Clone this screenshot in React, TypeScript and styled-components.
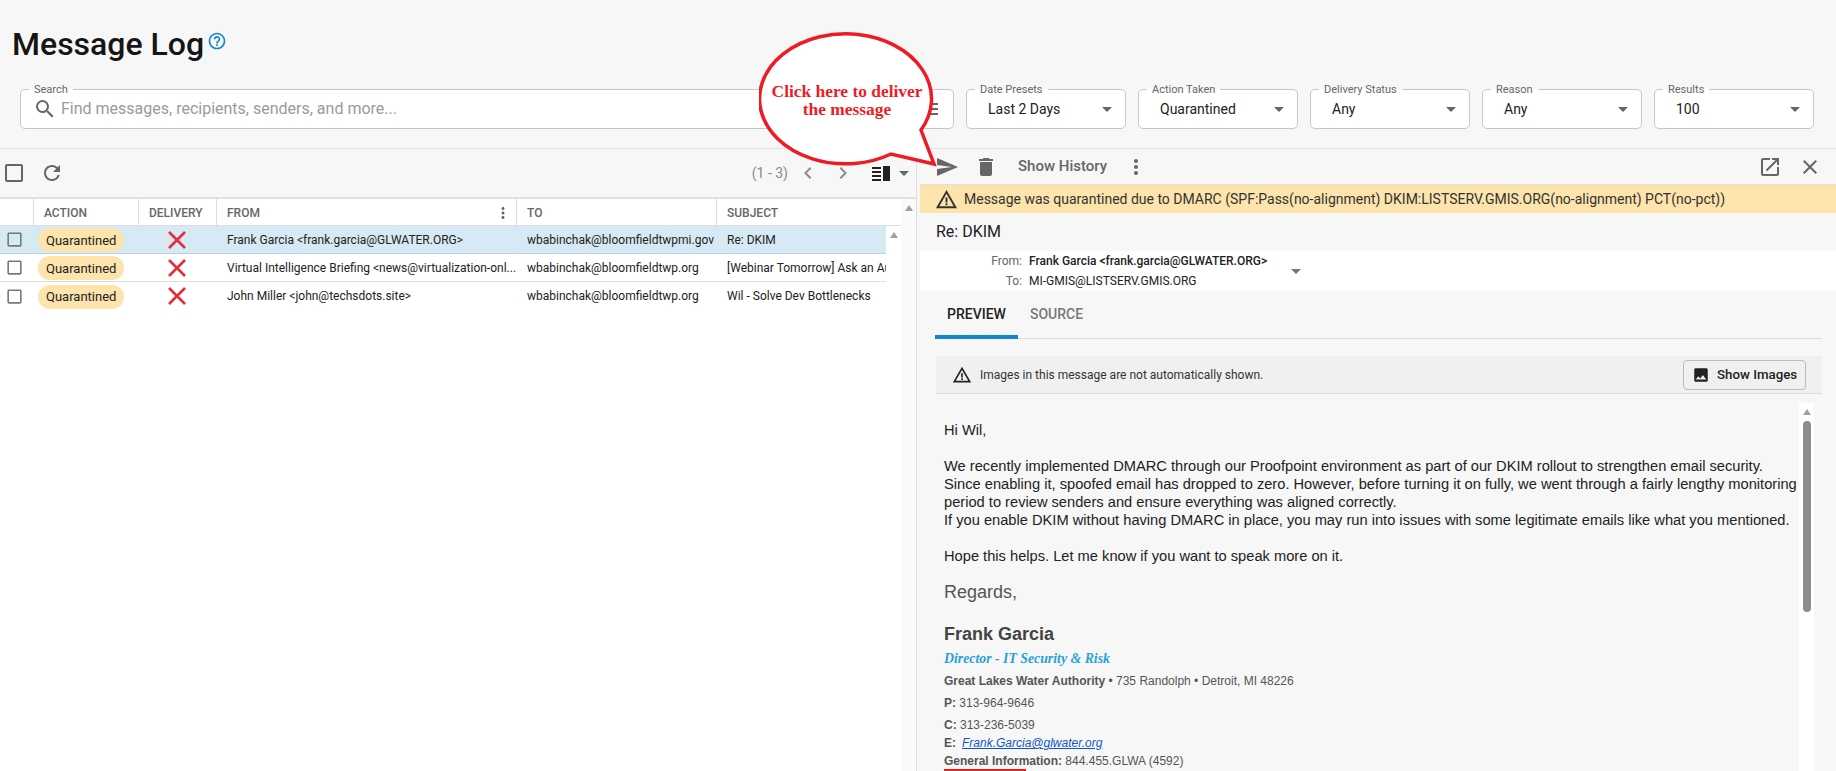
import React from "react";
import styled, { createGlobalStyle } from "styled-components";
import {
  MdArrowDropDown,
  MdCheckBoxOutlineBlank,
  MdChevronLeft,
  MdChevronRight,
  MdClose,
  MdDelete,
  MdHelpOutline,
  MdImage,
  MdMenu,
  MdMoreVert,
  MdOpenInNew,
  MdRefresh,
  MdSearch,
  MdSend,
  MdWarningAmber,
} from "react-icons/md";

const GlobalStyle = createGlobalStyle`
  html, body {
    margin: 0;
    padding: 0;
    height: 771px;
    overflow: hidden;
    background: #f7f7f7;
    font-family: Roboto, "Liberation Sans", sans-serif;
    color: #222;
  }
  * { box-sizing: border-box; }
`;

const Page = styled.div`
  position: relative;
  width: 1836px;
  height: 771px;
  display: flex;
  flex-direction: column;
  overflow: hidden;
`;

const Header = styled.header`
  height: 149px;
  flex: none;
  border-bottom: 1px solid #e0e0e0;
  padding: 24px 22px 0 12px;
`;

const TitleRow = styled.div`
  display: flex;
  align-items: flex-start;
  height: 65px;
`;

const Title = styled.h1`
  margin: 0;
  font-size: 32px;
  line-height: 40px;
  font-weight: 500;
  color: #151515;
`;

const HelpIcon = styled(MdHelpOutline)`
  font-size: 20px;
  color: #1487c9;
  margin: 7px 0 0 3px;
`;

const Filters = styled.div`
  display: flex;
  gap: 12px;
  margin-left: 8px;
`;

const Field = styled.div<{ $grow?: boolean }>`
  position: relative;
  flex: ${(p) => (p.$grow ? "1" : "none")};
  width: ${(p) => (p.$grow ? "auto" : "160px")};
  height: 40px;
  background: #fff;
  border: 1px solid #c6c6c6;
  border-radius: 5px;
  display: flex;
  align-items: center;
`;

const FieldLabel = styled.span`
  position: absolute;
  top: -7px;
  left: 8px;
  padding: 0 5px;
  font-size: 11px;
  line-height: 14px;
  color: #666;
  background: linear-gradient(#f7f7f7 0 6px, #fff 6px);
`;

const SelectValue = styled.span`
  margin-left: 21px;
  flex: 1;
  font-size: 14px;
  color: #222;
`;

const Caret = styled(MdArrowDropDown)`
  font-size: 24px;
  color: #666;
  margin-right: 6px;
`;

const SearchIcon = styled(MdSearch)`
  font-size: 24px;
  color: #666;
  margin-left: 12px;
`;

const Placeholder = styled.span`
  flex: 1;
  margin: 0 0 2px 4px;
  font-size: 16px;
  color: #9a9a9a;
`;

const MenuIcon = styled(MdMenu)`
  font-size: 24px;
  color: #666;
  margin-right: 12px;
`;

const Main = styled.div`
  flex: 1;
  min-height: 0;
  display: flex;
`;

const ListPane = styled.section`
  width: 917px;
  flex: none;
  display: flex;
  flex-direction: column;
  border-right: 1px solid #e0e0e0;
`;

const ListToolbar = styled.div`
  height: 48px;
  flex: none;
  display: flex;
  align-items: center;
  padding: 0 0 0 2px;
  color: #666;
`;

const ToolIcon = styled.span<{ $size?: number; $gap?: number }>`
  display: inline-flex;
  font-size: ${(p) => p.$size ?? 24}px;
  margin-right: ${(p) => p.$gap ?? 0}px;
  color: #666;
`;

const Pager = styled.div`
  margin-left: auto;
  display: flex;
  align-items: center;
`;

const PagerCount = styled.span`
  font-size: 14px;
  color: #8b8b8b;
  margin-right: 8px;
`;

const PagerStep = styled.span<{ $gap: number }>`
  display: inline-flex;
  font-size: 24px;
  margin-right: ${(p) => p.$gap}px;
  color: #8b8b8b;
`;

const ColumnsCaret = styled(MdArrowDropDown)`
  font-size: 24px;
  color: #666;
  margin: 0 0 0 2px;
`;

const Table = styled.div`
  flex: 1;
  min-height: 0;
  display: flex;
  background: #fff;
  border-top: 2px solid #e0e0e0;
`;

const TableMain = styled.div`
  flex: 1;
  display: flex;
  flex-direction: column;
`;

const gridColumns = "33px 105px 78px 300px 200px 1fr";

const HeadRow = styled.div`
  height: 27px;
  flex: none;
  display: grid;
  grid-template-columns: ${gridColumns};
  border-bottom: 1px solid #ddd;
`;

const HeadCell = styled.div`
  display: flex;
  align-items: center;
  justify-content: space-between;
  padding: 1px 4px 0 10px;
  font-size: 12px;
  font-weight: 500;
  color: #666;
  text-transform: uppercase;
  border-left: 1px solid #ddd;
  &:first-child { border-left: none; }
`;

const HeadDots = styled(MdMoreVert)`
  font-size: 18px;
  color: #666;
`;

const BodyWrap = styled.div`
  flex: 1;
  display: flex;
  min-height: 0;
`;

const Rows = styled.div`
  flex: 1;
  min-width: 0;
`;

const Row = styled.div<{ $selected?: boolean }>`
  height: 28px;
  display: grid;
  grid-template-columns: ${gridColumns};
  align-items: center;
  background: ${(p) => (p.$selected ? "#d6e9f5" : "#fff")};
  border-bottom: 1px solid ${(p) => (p.$selected ? "#b9d0e0" : "#ddd")};
  font-size: 12px;
  color: #222;
  &:last-child { border-bottom: none; }
`;

const RowCheck = styled(MdCheckBoxOutlineBlank)`
  font-size: 19px;
  color: #777;
  margin-left: 5px;
`;

const Chip = styled.span`
  justify-self: start;
  margin: 1px 0 0 5px;
  height: 24px;
  padding: 0 8px;
  display: inline-flex;
  align-items: center;
  border-radius: 12px;
  background: #fde3ac;
  font-size: 13px;
  color: #222;
`;

const DeliveryMark = styled.svg`
  justify-self: center;
  margin-left: -1px;
  width: 20px;
  height: 20px;
`;

const Cell = styled.div`
  padding-left: 11px;
  white-space: nowrap;
  overflow: hidden;
`;

const Rail = styled.div<{ $tone?: string }>`
  width: 15px;
  flex: none;
  background: ${(p) => p.$tone ?? "#fff"};
  display: flex;
  flex-direction: column;
  align-items: center;
  padding-top: 6px;
`;

const RailArrow = styled.span`
  width: 0;
  height: 0;
  border-left: 4px solid transparent;
  border-right: 4px solid transparent;
  border-bottom: 6px solid #a0a0a0;
`;

const RailThumb = styled.div`
  width: 8px;
  height: 191px;
  margin-top: 6px;
  border-radius: 4px;
  background: #8c8c8c;
`;

const ReaderPane = styled.section`
  flex: 1;
  margin-left: 3px;
  min-width: 0;
  display: flex;
  flex-direction: column;
`;

const ReaderToolbar = styled.div`
  height: 36px;
  flex: none;
  display: flex;
  align-items: center;
  padding: 0 14px 0 15px;
  border-bottom: 1px solid #e0e0e0;
`;

const HistoryLabel = styled.span`
  font-size: 15px;
  font-weight: 500;
  color: #666;
  margin: 0 17px 2px 0;
`;

const ToolbarEnd = styled.div`
  margin-left: auto;
  display: flex;
  align-items: center;
  gap: 16px;
`;

const Banner = styled.div`
  height: 28px;
  flex: none;
  background: #fde3ac;
  display: flex;
  align-items: center;
  padding-left: 15px;
  font-size: 14px;
  color: #333;
`;

const BannerIcon = styled(MdWarningAmber)`
  font-size: 23px;
  color: #333;
  margin-right: 6px;
`;

const Subject = styled.div`
  height: 38px;
  flex: none;
  padding: 0 0 2px 16px;
  display: flex;
  align-items: center;
  font-size: 16px;
  color: #222;
`;

const Addresses = styled.div`
  height: 40px;
  flex: none;
  background: #fff;
  border-radius: 0 0 0 4px;
  display: grid;
  grid-template-columns: 102px max-content 16px;
  grid-template-rows: 20px 20px;
  column-gap: 7px;
  align-items: center;
  font-size: 12px;
`;

const AddressLabel = styled.span`
  text-align: right;
  color: #666;
`;

const AddressValue = styled.span<{ $strong?: boolean }>`
  font-weight: ${(p) => (p.$strong ? 500 : 400)};
  color: #222;
`;

const AddressCaret = styled(MdArrowDropDown)`
  grid-column: 3;
  grid-row: 1 / span 2;
  font-size: 24px;
  color: #777;
  margin-left: 10px;
`;

const Tabs = styled.div`
  height: 48px;
  flex: none;
  margin: 0 14px 0 15px;
  display: flex;
  border-bottom: 1px solid #ddd;
`;

const Tab = styled.div<{ $active?: boolean }>`
  height: 48px;
  width: ${(p) => (p.$active ? "83px" : "auto")};
  padding: 2px 12px 0;
  display: flex;
  align-items: center;
  justify-content: center;
  font-size: 14px;
  font-weight: 500;
  color: ${(p) => (p.$active ? "#222" : "#777")};
  border-bottom: 4px solid ${(p) => (p.$active ? "#1487c9" : "transparent")};
`;

const Notice = styled.div`
  height: 38px;
  flex: none;
  margin: 17px 14px 0 16px;
  background: #f0f0f0;
  border-bottom: 1px solid #ddd;
  display: flex;
  align-items: center;
  padding: 0 16px 0 16px;
  font-size: 12px;
  color: #333;
`;

const NoticeIcon = styled(MdWarningAmber)`
  font-size: 20px;
  color: #222;
  margin-right: 8px;
`;

const ShowImages = styled.div`
  margin-left: auto;
  width: 123px;
  height: 30px;
  display: flex;
  align-items: center;
  gap: 7px;
  padding-left: 8px;
  border: 1px solid #bbb;
  border-radius: 4px;
  font-size: 13.3px;
  font-weight: 500;
  color: #222;
`;

const ImageIcon = styled(MdImage)`
  font-size: 18px;
  color: #222;
`;

const MailWrap = styled.div`
  flex: 1;
  min-height: 0;
  display: flex;
  margin: 9px 22px 0 24px;
`;

const MailBody = styled.div`
  flex: 1;
  min-width: 0;
  padding-top: 18px;
  font-family: "Liberation Sans", Arial, sans-serif;
  font-size: 14.67px;
  line-height: 18px;
  color: #222;
  white-space: nowrap;
`;

const Para = styled.p`
  margin: 0 0 18px;
`;

const Regards = styled.div`
  margin-top: -3px;
  font-size: 18px;
  line-height: 24px;
  color: #555;
`;

const SignName = styled.div`
  margin-top: 18px;
  font-size: 18px;
  line-height: 24px;
  font-weight: 700;
  color: #444;
`;

const SignRole = styled.div`
  margin-top: 4px;
  font-family: "Liberation Serif", serif;
  font-size: 13.8px;
  font-style: italic;
  font-weight: 700;
  color: #2a9fd8;
`;

const SignLine = styled.div<{ $tight?: boolean }>`
  margin-top: ${(p) => (p.$tight ? 0 : 4)}px;
  font-size: 12px;
  line-height: 18px;
  color: #555;
  b { font-weight: 700; }
`;

const SignLink = styled.a`
  margin-left: 6px;
  font-style: italic;
  color: #1155cc;
  text-decoration: underline;
`;

const SignRule = styled.div`
  width: 82px;
  height: 2px;
  margin-top: -1px;
  background: #e02020;
`;

const Callout = styled.div`
  position: absolute;
  left: 759px;
  top: 30px;
  width: 180px;
  height: 138px;
`;

const CalloutShape = styled.svg`
  position: absolute;
  inset: 0;
  width: 180px;
  height: 138px;
`;

const CalloutText = styled.div`
  position: absolute;
  left: 0;
  top: 52px;
  width: 176px;
  text-align: center;
  font-family: "Liberation Serif", serif;
  font-size: 17.4px;
  line-height: 18px;
  font-weight: 700;
  color: #ed1c24;
`;

const selects = [
  { label: "Date Presets", value: "Last 2 Days" },
  { label: "Action Taken", value: "Quarantined" },
  { label: "Delivery Status", value: "Any" },
  { label: "Reason", value: "Any" },
  { label: "Results", value: "100" },
];

const messages = [
  {
    from: "Frank Garcia <frank.garcia@GLWATER.ORG>",
    to: "wbabinchak@bloomfieldtwpmi.gov",
    subject: "Re: DKIM",
  },
  {
    from: "Virtual Intelligence Briefing <news@virtualization-onl...",
    to: "wbabinchak@bloomfieldtwp.org",
    subject: "[Webinar Tomorrow] Ask an Au",
  },
  {
    from: "John Miller <john@techsdots.site>",
    to: "wbabinchak@bloomfieldtwp.org",
    subject: "Wil - Solve Dev Bottlenecks",
  },
];

const ColumnsIcon = () => (
  <svg width="18" height="15" viewBox="0 0 18 15">
    <path d="M0 1h9v2H0zM0 5h9v2H0zM0 9h9v2H0zM0 13h9v2H0z" fill="#222" />
    <rect x="11" y="0" width="7" height="15" fill="#222" />
  </svg>
);

export default function App() {
  return (
    <Page>
      <GlobalStyle />
      <Header>
        <TitleRow>
          <Title>Message Log</Title>
          <HelpIcon />
        </TitleRow>
        <Filters>
          <Field $grow>
            <FieldLabel>Search</FieldLabel>
            <SearchIcon />
            <Placeholder>Find messages, recipients, senders, and more...</Placeholder>
            <MenuIcon />
          </Field>
          {selects.map((s) => (
            <Field key={s.label}>
              <FieldLabel>{s.label}</FieldLabel>
              <SelectValue>{s.value}</SelectValue>
              <Caret />
            </Field>
          ))}
        </Filters>
      </Header>

      <Main>
        <ListPane>
          <ListToolbar>
            <ToolIcon $gap={14}>
              <MdCheckBoxOutlineBlank />
            </ToolIcon>
            <ToolIcon>
              <MdRefresh />
            </ToolIcon>
            <Pager>
              <PagerCount>(1 - 3)</PagerCount>
              <PagerStep $gap={11}>
                <MdChevronLeft />
              </PagerStep>
              <PagerStep $gap={17}>
                <MdChevronRight />
              </PagerStep>
              <ColumnsIcon />
              <ColumnsCaret />
            </Pager>
          </ListToolbar>
          <Table>
            <TableMain>
              <HeadRow>
                <HeadCell />
                <HeadCell>Action</HeadCell>
                <HeadCell>Delivery</HeadCell>
                <HeadCell>
                  From
                  <HeadDots />
                </HeadCell>
                <HeadCell>To</HeadCell>
                <HeadCell>Subject</HeadCell>
              </HeadRow>
              <BodyWrap>
                <Rows>
                  {messages.map((m, i) => (
                    <Row key={m.from} $selected={i === 0}>
                      <RowCheck />
                      <Chip>Quarantined</Chip>
                      <DeliveryMark viewBox="0 0 20 20">
                        <path d="M2 2l16 16M18 2L2 18" stroke="#e0303a" strokeWidth="2.6" fill="none" />
                      </DeliveryMark>
                      <Cell>{m.from}</Cell>
                      <Cell>{m.to}</Cell>
                      <Cell>{m.subject}</Cell>
                    </Row>
                  ))}
                </Rows>
                <Rail>
                  <RailArrow />
                </Rail>
              </BodyWrap>
            </TableMain>
            <Rail $tone="#fafafa">
              <RailArrow />
            </Rail>
          </Table>
        </ListPane>

        <ReaderPane>
          <ReaderToolbar>
            <ToolIcon $gap={15}>
              <MdSend />
            </ToolIcon>
            <ToolIcon $gap={20}>
              <MdDelete />
            </ToolIcon>
            <HistoryLabel>Show History</HistoryLabel>
            <ToolIcon>
              <MdMoreVert />
            </ToolIcon>
            <ToolbarEnd>
              <ToolIcon>
                <MdOpenInNew />
              </ToolIcon>
              <ToolIcon>
                <MdClose />
              </ToolIcon>
            </ToolbarEnd>
          </ReaderToolbar>
          <Banner>
            <BannerIcon />
            Message was quarantined due to DMARC (SPF:Pass(no-alignment) DKIM:LISTSERV.GMIS.ORG(no-alignment) PCT(no-pct))
          </Banner>
          <Subject>Re: DKIM</Subject>
          <Addresses>
            <AddressLabel>From:</AddressLabel>
            <AddressValue $strong>Frank Garcia &lt;frank.garcia@GLWATER.ORG&gt;</AddressValue>
            <AddressCaret />
            <AddressLabel>To:</AddressLabel>
            <AddressValue>MI-GMIS@LISTSERV.GMIS.ORG</AddressValue>
          </Addresses>
          <Tabs>
            <Tab $active>PREVIEW</Tab>
            <Tab>SOURCE</Tab>
          </Tabs>
          <Notice>
            <NoticeIcon />
            Images in this message are not automatically shown.
            <ShowImages>
              <ImageIcon />
              Show Images
            </ShowImages>
          </Notice>
          <MailWrap>
            <MailBody>
              <Para>Hi Wil,</Para>
              <Para>
                We recently implemented DMARC through our Proofpoint environment as part of our DKIM rollout to strengthen email security.
                <br />
                Since enabling it, spoofed email has dropped to zero. However, before turning it on fully, we went through a fairly lengthy monitoring
                <br />
                period to review senders and ensure everything was aligned correctly.
                <br />
                If you enable DKIM without having DMARC in place, you may run into issues with some legitimate emails like what you mentioned.
              </Para>
              <Para>Hope this helps. Let me know if you want to speak more on it.</Para>
              <Regards>Regards,</Regards>
              <SignName>Frank Garcia</SignName>
              <SignRole>Director - IT Security &amp; Risk</SignRole>
              <SignLine>
                <b>Great Lakes Water Authority</b> • 735 Randolph • Detroit, MI 48226
              </SignLine>
              <SignLine>
                <b>P:</b> 313-964-9646
              </SignLine>
              <SignLine>
                <b>C:</b> 313-236-5039
              </SignLine>
              <SignLine $tight>
                <b>E:</b>
                <SignLink>Frank.Garcia@glwater.org</SignLink>
              </SignLine>
              <SignLine $tight>
                <b>General Information:</b> 844.455.GLWA (4592)
              </SignLine>
              <SignRule />
            </MailBody>
            <Rail>
              <RailArrow />
              <RailThumb />
            </Rail>
          </MailWrap>
        </ReaderPane>
      </Main>

      <Callout>
        <CalloutShape viewBox="0 0 180 138">
          <path
            d="M162 100 A86 65 0 1 0 132 124 L175 134 Z"
            fill="#fff"
            stroke="#ed1c24"
            strokeWidth="3.5"
          />
        </CalloutShape>
        <CalloutText>
          Click here to deliver
          <br />
          the message
        </CalloutText>
      </Callout>
    </Page>
  );
}
